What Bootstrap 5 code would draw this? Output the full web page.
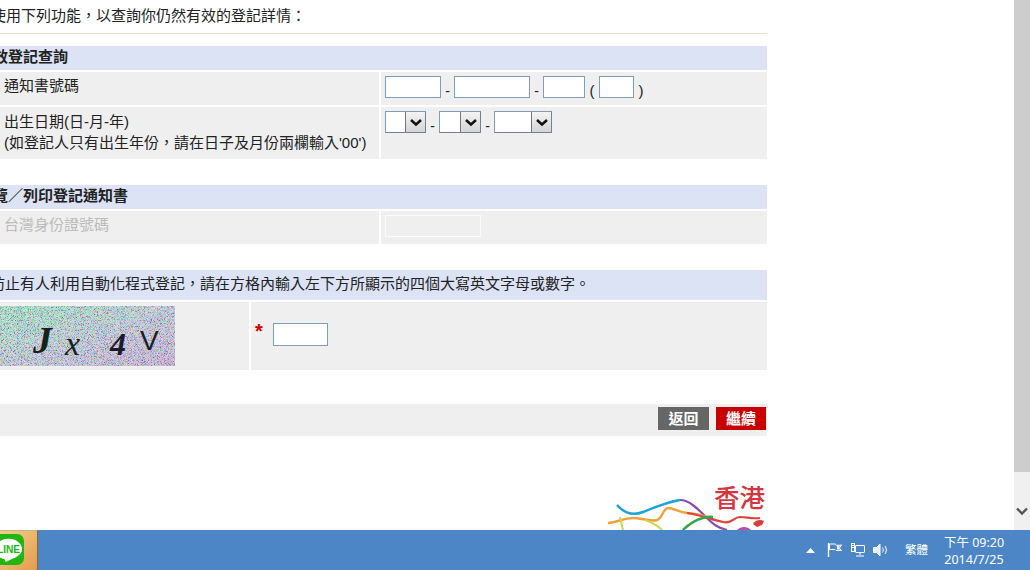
<!DOCTYPE html>
<html lang="zh-Hant">
<head>
<meta charset="utf-8">
<title>登記查詢</title>
<link href="https://cdn.jsdelivr.net/npm/bootstrap@5.3.0/dist/css/bootstrap.min.css" rel="stylesheet">
<style>
html,body{height:570px;overflow:hidden;background:#fff}
body{font-family:"Liberation Sans","Noto Sans CJK TC",sans-serif;font-size:15px;line-height:20px;color:#222}
.screen{height:570px}
.viewport{height:530px;overflow:hidden}
.pagearea{width:1014px;overflow:hidden}
.sheet{width:793px;margin-left:-26px}
.intro{height:34px;border-bottom:1px solid #e8e3cc;padding:6px 0 0 17px}
.sec-head{background:#dce3f5;font-weight:700;height:24px;line-height:21px;margin-bottom:2px}
.sec-a{margin-top:12px;padding-left:4px}
.sec-b{margin-top:26px;padding-left:4px}
.sec-c{margin-top:26px;height:30px;line-height:28px;padding-left:1px;font-weight:400}
.frow{margin-bottom:2px;gap:2px}
.cell{background:#efefef}
.cell-label{width:405px;padding:4px 0 0 30px}
.h33{height:33px}.h52{height:52px;line-height:21px}.h68{height:68px}
.cell-value{flex:1;padding:4px 0 0 4px;font-size:15px}
.box{display:inline-block;height:22px;background:#fff;border:1px solid #7f9db9;vertical-align:top}
.w56{width:56px}.w76{width:76px}.w42{width:42px}.w35{width:35px}.w55{width:55px}.w96{width:96px}
.sep{display:inline-block;width:13px;text-align:center;line-height:30px;vertical-align:top;font-size:14px}
.sep-p{display:inline-block;width:14px;text-align:center;line-height:29px;vertical-align:top}
.fakeselect{display:inline-flex;height:22px;background:#fff;border:1px solid #7f9db9;border-right-color:#6f8296;border-bottom-color:#6f8296;vertical-align:top;justify-content:flex-end}
.fs41{width:41px}.fs42{width:42px}.fs58{width:58px}
.fakearrow{width:20px;height:20px;background:linear-gradient(#f4f4f4,#d4d4d4);border-left:1px solid #777;display:flex;align-items:center;justify-content:center}
.muted-row{color:#bbb}
.box-off{background:transparent;border-color:#fbfbfb}
.cell-captcha{width:275px;padding:4px 0 0 26px}
.cell-captcha svg{display:block}
.cell-answer{flex:1;padding:21px 0 0 4px}
.star{display:inline-block;width:18px;color:#d40000;font-weight:700;font-size:20px;line-height:16px;vertical-align:top}
.box-tall{height:23px}
.actionbar{margin-top:34px;height:32px;background:#efefef;padding:3px 1px 0 0;gap:7px;justify-content:flex-end}
.act{width:51px;height:23px;color:#fff;font-weight:700;font-size:15px;line-height:23px;text-align:center;border:0;padding:0}
.act-grey{background:#666}
.act-red{background:#c80000;width:50px}
.hk-logo{margin-top:48px;justify-content:flex-end}
.hk-logo svg{display:block}
.hk-word{font-family:"Noto Sans CJK TC",sans-serif;font-size:25.5px;font-weight:500;fill:#d8343c}
.vscroll{width:16px;background:#f0f0f0}
.vthumb{height:472px;background:#cdcdcd}
.varrow{height:58px;padding-top:28px;text-align:center}
.taskbar{height:40px;background:#4c86c6;color:#fff}
.tb-app{width:38px;height:40px;background:linear-gradient(135deg,#f1d08a,#e39c4f);border-right:1px solid #8a6a33;border-top:1px solid #c9b37f;overflow:hidden}
.tb-line{margin-left:-7px;margin-top:3px;display:block}
.tray{font-family:"Noto Sans","Noto Sans CJK TC",sans-serif;font-size:12px;padding-right:20px}
.tr-tri{margin-right:12px}
.tr-flag{margin-right:7px}
.tr-net{margin-right:6px}
.tb-ime{margin:0 10px 0 15px;font-size:11.5px}
.tb-clock{line-height:17px;text-align:center;font-size:12.5px;width:72px;padding-top:1px}
</style>
</head>
<body>
<div class="screen d-flex flex-column">
  <div class="viewport d-flex">
    <div class="pagearea flex-shrink-0">
      <div class="sheet">
        <div class="intro">使用下列功能，以查詢你仍然有效的登記詳情：</div>

        <div class="sec-head sec-a">有效登記查詢</div>
        <div class="d-flex frow">
          <div class="cell cell-label h33">通知書號碼</div>
          <div class="cell cell-value h33"><span class="box w56"></span><span class="sep">-</span><span class="box w76"></span><span class="sep">-</span><span class="box w42"></span><span class="sep-p">(</span><span class="box w35"></span><span class="sep-p">)</span></div>
        </div>
        <div class="d-flex frow">
          <div class="cell cell-label h52">出生日期(日-月-年)<br>(如登記人只有出生年份，請在日子及月份兩欄輸入'00')</div>
          <div class="cell cell-value h52">
            <span class="fakeselect fs41"><span class="fakearrow"><svg width="14" height="9" viewBox="0 0 14 9"><path d="M2 2l5 4.500L12 2" fill="none" stroke="#111" stroke-width="2.500"/></svg></span></span><span class="sep">-</span><span class="fakeselect fs42"><span class="fakearrow"><svg width="14" height="9" viewBox="0 0 14 9"><path d="M2 2l5 4.500L12 2" fill="none" stroke="#111" stroke-width="2.500"/></svg></span></span><span class="sep">-</span><span class="fakeselect fs58"><span class="fakearrow"><svg width="14" height="9" viewBox="0 0 14 9"><path d="M2 2l5 4.500L12 2" fill="none" stroke="#111" stroke-width="2.500"/></svg></span></span>
          </div>
        </div>

        <div class="sec-head sec-b">瀏覽／列印登記通知書</div>
        <div class="d-flex frow muted-row">
          <div class="cell cell-label h33">台灣身份證號碼</div>
          <div class="cell cell-value h33"><span class="box box-off w96"></span></div>
        </div>

        <div class="sec-head sec-c">為防止有人利用自動化程式登記，請在方格內輸入左下方所顯示的四個大寫英文字母或數字。</div>
        <div class="d-flex frow">
          <div class="cell cell-captcha h68">
            <svg width="175" height="60" viewBox="0 0 175 60" role="img" aria-label="驗證碼">
              <defs>
                <linearGradient id="cg" x1="0" y1="0" x2="1" y2="1"><stop offset="0" stop-color="#8fe8c0"/><stop offset=".5" stop-color="#b6c6dc"/><stop offset="1" stop-color="#c2a4dc"/></linearGradient>
                <filter id="cn" x="0" y="0" width="100%" height="100%"><feTurbulence type="fractalNoise" baseFrequency="1.3" numOctaves="2" seed="4"/><feColorMatrix type="matrix" values="3.500 0 0 0 -1.100  0 3.500 0 0 -1.100  0 0 3.500 0 -1.100  0 0 0 0 .42"/></filter>
              </defs>
              <rect width="175" height="60" fill="url(#cg)"/>
              <rect width="175" height="60" filter="url(#cn)"/>
              <g font-family="Liberation Serif,serif" fill="#14241c">
                <text x="33" y="47" font-size="38" font-weight="700" font-style="italic">J</text>
                <text x="65" y="49" font-size="34" font-style="italic">x</text>
                <text x="110" y="49" font-size="32" font-weight="700" font-style="italic" fill="#1a1a2a">4</text>
                <text x="140" y="44" font-size="28" font-family="Liberation Sans,sans-serif" fill="#1a1a2a">V</text>
              </g>
            </svg>
          </div>
          <div class="cell cell-answer h68"><span class="star">*</span><span class="box w55 box-tall"></span></div>
        </div>

        <div class="actionbar d-flex">
          <button type="button" class="act act-grey">返回</button>
          <button type="button" class="act act-red">繼續</button>
        </div>

        <div class="hk-logo d-flex">
          <svg width="170" height="60" viewBox="0 0 170 60">
            <text class="hk-word" x="117" y="22.500">香港</text>
            <path d="M20 21C28 30 36 32 46 28S70 18 83 16" fill="none" stroke="#1aa5d6" stroke-width="2.500"/>
            <path d="M83 16C92 16 100 24 110 34S124 44 130 46" fill="none" stroke="#8a4bb0" stroke-width="2.200"/>
            <path d="M11 39C20 38 28 34 36 34S54 38 60 36 66 24 71 24 82 28 90 29 104 31 110 33" fill="none" stroke="#eea23c" stroke-width="2.500"/>
            <path d="M90 29C100 30 116 36 126 38S136 33 143 33 154 35 163 34" fill="none" stroke="#e0433a" stroke-width="2.200"/>
            <path d="M86 46C92 40 98 36 106 34S112 33 116 33" fill="none" stroke="#2fa84f" stroke-width="2.500"/>
            <path d="M23 33C24 38 25 41 26 46M48 36C54 38 60 41 65 46" fill="none" stroke="#cfd84a" stroke-width="2"/>
            <path d="M156 40C158 36 163 35 167 37L165 41 160 43z" fill="#dd3a3a"/>
            <path d="M140 46C144 42 150 42 154 46z" fill="#c04ab0"/>
          </svg>
        </div>
      </div>
    </div>
    <div class="vscroll flex-shrink-0">
      <div class="vthumb"></div>
      <div class="varrow"><svg width="12" height="9" viewBox="0 0 12 9"><path d="M1 1.500l5 5 5-5" fill="none" stroke="#555" stroke-width="2.400"/></svg></div>
    </div>
  </div>

  <div class="taskbar d-flex align-items-center justify-content-between">
    <div class="tb-app">
      <svg class="tb-line" width="31" height="31" viewBox="0 0 32 32">
        <rect width="32" height="32" rx="7" fill="#22b613"/>
        <path d="M16 5C8 5 2 10 2 16c0 5 4 9 10 10l1 3 6-3c6-2 11-6 11-10 0-6-6-11-14-11z" fill="#fff"/>
        <text x="16" y="20" text-anchor="middle" font-family="Liberation Sans,sans-serif" font-weight="700" font-size="10.500" fill="#22b613">LINE</text>
      </svg>
    </div>
    <div class="tray d-flex align-items-center">
      <svg class="tr-tri" width="9" height="6" viewBox="0 0 9 6"><path d="M0 6l4.500-5L9 6z" fill="#fff"/></svg>
      <svg class="tr-flag" width="16" height="16" viewBox="0 0 16 16"><path d="M1.500 1v14" stroke="#fff" stroke-width="1.400"/><path d="M2.500 2h6l1 1.500 5-.5-2 3 2 2.500H9l-1-1H2.500z" fill="none" stroke="#fff"/><path d="M10 4l3-.3-1.200 2.100L13 7.500h-3z" fill="#fff"/></svg>
      <svg class="tr-net" width="16" height="16" viewBox="0 0 16 16" fill="none" stroke="#fff"><rect x="5.500" y="3.500" width="9" height="7" rx=".5"/><rect x="1.500" y="1.500" width="3" height="8"/><path d="M10 11v2M6 14h8M2 3.500h2M2 5.500h2"/></svg>
      <svg width="18" height="16" viewBox="0 0 18 16" fill="none" stroke="#fff"><path d="M1.500 5.500h3l3.500-3.500v12L4.500 10.500h-3z" fill="#e6eef8"/><path d="M10.500 5.500c1 1.500 1 3.500 0 5M13 4c1.800 2.500 1.800 5.500 0 8"/></svg>
      <span class="tb-ime">繁體</span>
      <div class="tb-clock">下午 09:20<br>2014/7/25</div>
    </div>
  </div>
</div>
<script src="https://cdn.jsdelivr.net/npm/bootstrap@5.3.0/dist/js/bootstrap.bundle.min.js"></script>
</body>
</html>
